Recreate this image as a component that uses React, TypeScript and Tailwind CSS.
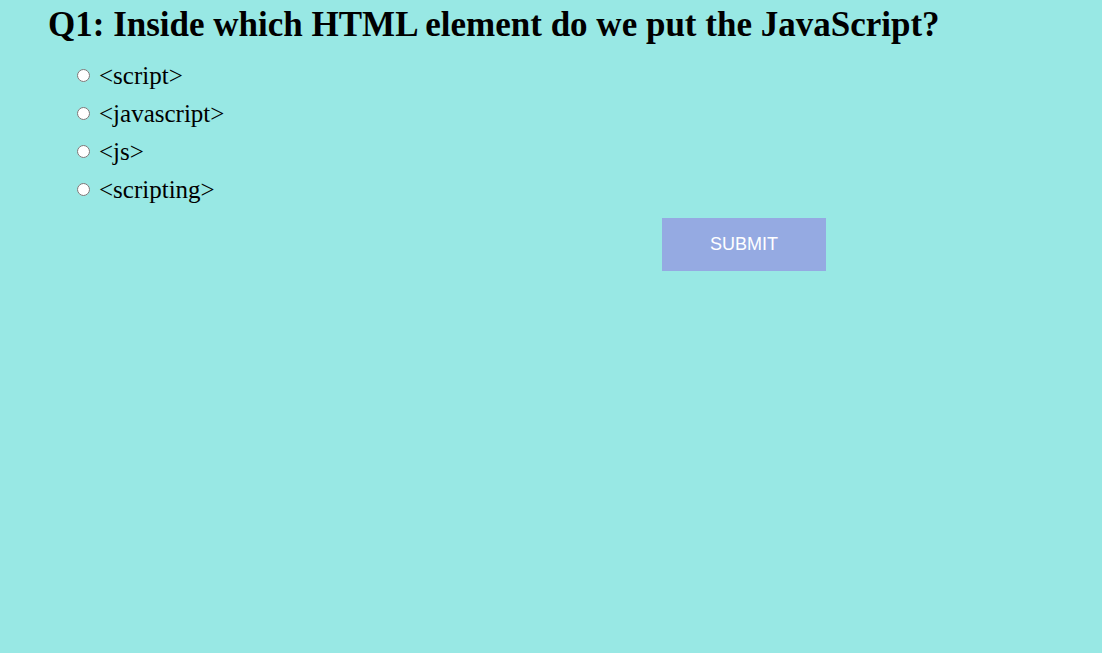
export default function App() {
  const options = ['<script>', '<javascript>', '<js>', '<scripting>'];

  return (
    <div className="min-h-[653px] w-full bg-[#98e8e4] font-['Liberation_Serif',serif] text-black">
      <div className="pl-12">
        <h1 className="text-[35px] font-bold leading-[50px]">
          Q1: Inside which HTML element do we put the JavaScript?
        </h1>
        <ul className="pl-[29px] pt-[6px]">
          {options.map((opt) => (
            <li key={opt} className="flex h-[38px] items-center">
              <input
                type="radio"
                name="q1"
                className="m-0 mr-[9px] h-[13px] w-[13px]"
              />
              <span className="text-[25px] leading-none">{opt}</span>
            </li>
          ))}
        </ul>
        <div className="pl-[614px] pt-[10px]">
          <button className="h-[53px] w-[164px] bg-[#95aae2] font-['Liberation_Sans',sans-serif] text-[18px] text-white">
            SUBMIT
          </button>
        </div>
      </div>
    </div>
  );
}
